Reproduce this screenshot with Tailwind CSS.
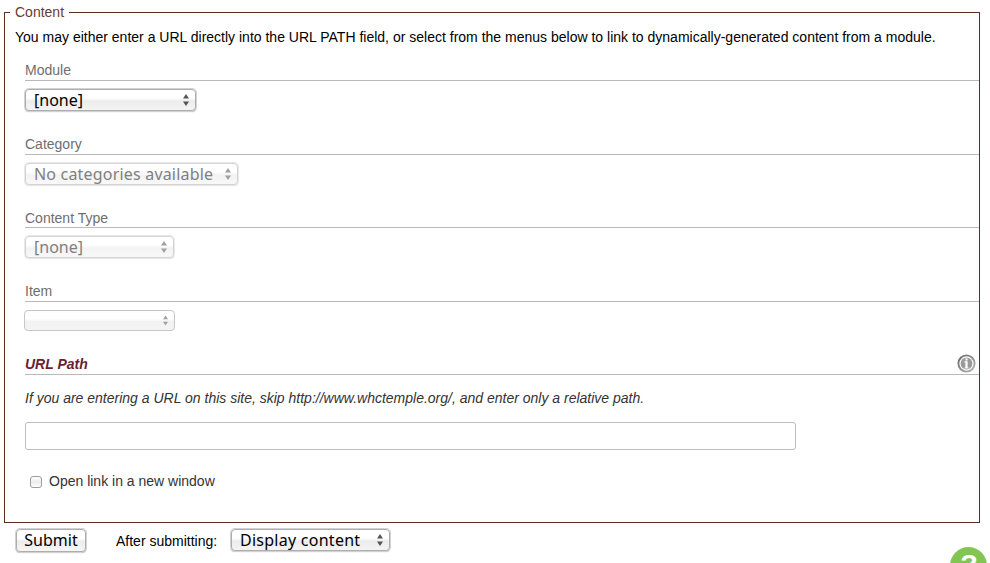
<!DOCTYPE html>
<html lang="en">
<head>
<meta charset="utf-8">
<title>Content</title>
<script src="https://cdn.jsdelivr.net/npm/@tailwindcss/browser@4"></script>
</head>
<body class="bg-white w-[990px] h-[563px] overflow-hidden relative text-[14px] leading-5 font-['Liberation_Sans',Arial,sans-serif] text-black">
<svg class="hidden"><symbol id="arrows" viewBox="0 0 6 12"><path d="M0 4.5L3 0L6 4.5ZM0 7.5L3 12L6 7.5Z" fill="currentColor"/></symbol></svg>
<form>
<fieldset class="ml-1 w-[976px] h-[523px] border border-[#5f2c24] pl-[5px]">
  <legend class="h-6 px-[5px] leading-6 text-[#6b3a32]"><span class="inline-block">Content</span></legend>
  <p class="h-[26px] leading-[26px] pl-[5px] whitespace-nowrap tracking-[0.004px]"><span class="inline-block">You may either enter a URL directly into the URL PATH field, or select from the menus below to link to dynamically-generated content from a module.</span></p>
  <div class="pl-[15px]">
    <section class="h-[74px]">
      <h3 class="h-[31px] flex items-end border-b border-[#b9b9b9] text-[#6e6e6e]">Module</h3>
      <div class="mt-2 w-[171px] h-[22px] flex items-center justify-between rounded-[4px] border border-[#adadad] shadow-[0_0_0_1px_#d2d2d2,0_1px_1px_#aaa] bg-linear-to-b from-white from-40% via-[#ececec] via-55% to-[#f4f4f4] pl-2 pr-[6px] font-['Noto_Sans',sans-serif] text-[16px] leading-5"><span>[none]</span><svg class="w-[6px] h-[12px] text-[#555]"><use href="#arrows"/></svg></div>
    </section>
    <section class="h-[74px]">
      <h3 class="h-[31px] flex items-end border-b border-[#b9b9b9] text-[#6e6e6e]">Category</h3>
      <div class="mt-2 w-[213px] h-[22px] flex items-center justify-between rounded-[4px] border border-[#d4d4d4] shadow-[0_0_0_1px_#e8e8e8,0_1px_1px_#d8d8d8] bg-linear-to-b from-white from-40% via-[#f3f3f3] via-55% to-[#f8f8f8] pl-2 pr-[6px] font-['Noto_Sans',sans-serif] text-[16px] leading-5 text-[#808080] whitespace-nowrap"><span class="tracking-[0.19px]">No categories available</span><svg class="w-[6px] h-[12px] text-[#a0a0a0]"><use href="#arrows"/></svg></div>
    </section>
    <section class="h-[73px]">
      <h3 class="h-[30px] flex items-end border-b border-[#b9b9b9] text-[#6e6e6e]"><span class="-mb-px">Content Type</span></h3>
      <div class="mt-2 w-[149px] h-[22px] flex items-center justify-between rounded-[4px] border border-[#d4d4d4] shadow-[0_0_0_1px_#e8e8e8,0_1px_1px_#d8d8d8] bg-linear-to-b from-white from-40% via-[#f3f3f3] via-55% to-[#f8f8f8] pl-2 pr-[6px] font-['Noto_Sans',sans-serif] text-[16px] leading-5 text-[#808080]"><span>[none]</span><svg class="w-[6px] h-[12px] text-[#a0a0a0]"><use href="#arrows"/></svg></div>
    </section>
    <section class="h-[73px]">
      <h3 class="h-[31px] flex items-end border-b border-[#b9b9b9] text-[#6e6e6e]">Item</h3>
      <div class="mt-2 -ml-px w-[151px] h-[21px] flex items-center justify-end rounded-[4px] border border-[#c6c6c6] bg-linear-to-b from-white from-40% via-[#f2f2f2] via-55% to-[#f4f4f4] pr-[6px]"><svg class="w-[5px] h-[11px] text-[#a0a0a0]"><use href="#arrows"/></svg></div>
    </section>
    <section>
      <div class="h-[31px] flex items-end justify-between border-b border-[#b9b9b9]">
        <h3 class="font-bold italic text-[#6b1f33]"><span class="inline-block">URL Path</span></h3>
        <svg class="w-[19px] h-[19px] mr-[3px] mb-[1px]" viewBox="0 0 19 19">
          <defs><linearGradient id="ring" x1="0" y1="0" x2="1" y2="1"><stop offset="0" stop-color="#666"/><stop offset="1" stop-color="#b8b8b8"/></linearGradient></defs>
          <circle cx="9.5" cy="9.5" r="8.1" fill="white" stroke="url(#ring)" stroke-width="1.9"/>
          <circle cx="9.5" cy="9.5" r="5.9" fill="#9a9a9a"/>
          <path d="M8.4 4.6h2.2v1.8H8.4zM7.4 7.3h3.2v6.1h1v1.2H7.4v-1.2h1V8.5h-1z" fill="white"/>
        </svg>
      </div>
      <p class="mt-[13px] italic text-[#333] whitespace-nowrap"><span class="inline-block">If you are entering a URL on this site, skip http://www.whctemple.org/, and enter only a relative path.</span></p>
      <input type="text" class="block mt-[14px] w-[771px] h-7 rounded-[3px] border border-[#bdbdbd] bg-white">
      <label class="mt-[21px] ml-[5px] flex items-center text-[#333]">
        <span class="mt-[2px] w-3 h-3 rounded-[3px] border border-[#9c9c9c] bg-linear-to-b from-white via-[#ececec] to-white"></span>
        <span class="ml-[7px]">Open link in a new window</span>
      </label>
    </section>
  </div>
</fieldset>
<div class="pt-[6px] pl-4 flex items-start">
  <button type="button" class="w-[70px] h-[23px] rounded-[4px] border border-[#adadad] shadow-[0_0_0_1px_#d2d2d2,0_1px_1px_#aaa] bg-linear-to-b from-white from-40% via-[#ececec] via-55% to-[#f6f6f6] font-['Noto_Sans',sans-serif] text-[16px] leading-[21px]">Submit</button>
  <span class="ml-[30px] w-[115px] leading-6">After submitting:</span>
  <div class="w-[159px] h-[22px] flex items-center justify-between rounded-[4px] border border-[#adadad] shadow-[0_0_0_1px_#d2d2d2,0_1px_1px_#aaa] bg-linear-to-b from-white from-40% via-[#ececec] via-55% to-[#f4f4f4] pl-2 pr-[6px] font-['Noto_Sans',sans-serif] text-[16px] leading-5 whitespace-nowrap"><span class="tracking-[0.26px]">Display content</span><svg class="w-[6px] h-[12px] text-[#555]"><use href="#arrows"/></svg></div>
</div>
</form>
<div class="absolute left-[950px] top-[547px] w-[37px] h-[37px] rounded-full bg-[#82c553] text-white font-bold text-[26px] leading-[34px] text-center"><span class="inline-block scale-x-110">?</span></div>
</body>
</html>
